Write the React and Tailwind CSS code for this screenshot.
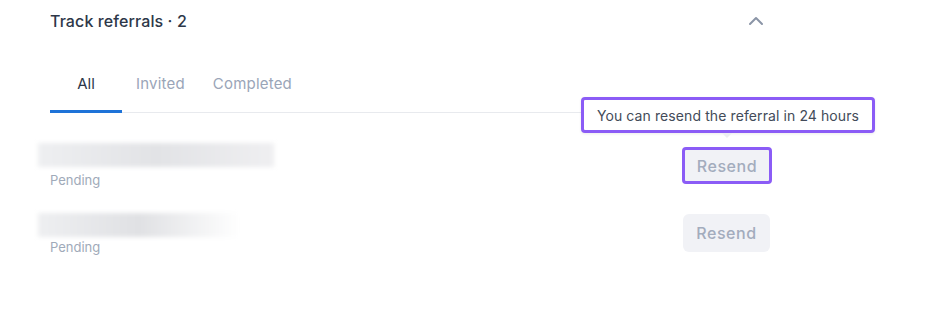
import React from "react";

export default function App() {
  return (
    <div className="relative w-[942px] h-[310px] bg-white overflow-hidden">
      <div className="font-['Inter',sans-serif]">
        {/* header */}
        <div className="flex items-center h-[42px] pl-[50px] pr-[178px] justify-between">
          <div className="text-[16px] font-medium text-[#2d3748] tracking-[0.1px]">Track referrals · 2</div>
          <svg width="16" height="10" viewBox="0 0 16 10">
            <path d="M2 8 L8 2 L14 8" fill="none" stroke="#8b95a7" strokeWidth="2" strokeLinecap="round" strokeLinejoin="round" />
          </svg>
        </div>
        {/* tabs */}
        <div className="mt-[24px] ml-[50px] w-[535px] flex border-b border-[#e8eaee] h-[47px]">
          <div className="w-[72px] flex justify-center pt-[7px] text-[15px] text-[#2d3748] border-b-[3px] border-[#1e73d8] -mb-[1px]">All</div>
          <div className="ml-[14px] pt-[7px] text-[15px] text-[#9aa5b8] tracking-[0.2px]">Invited</div>
          <div className="ml-[28px] pt-[7px] text-[15px] text-[#9aa5b8] tracking-[0.2px]">Completed</div>
        </div>
        {/* rows */}
        <div className="mt-[30px] pl-[38px] flex flex-col">
          <div className="flex">
            <div className="w-[236px] h-[24px] bg-gradient-to-r from-[#eeeff1] via-[#e2e3e6] to-[#efeff1] blur-[2px]"></div>
          </div>
          <div className="pl-[12px] mt-[4px] text-[13px] text-[#a0aab9]">Pending</div>
          <div className="mt-[22px] flex">
            <div className="w-[202px] h-[24px] bg-gradient-to-r from-[#eeeff1] via-[#e0e1e4] to-[#ffffff] blur-[2px]"></div>
          </div>
          <div className="pl-[12px] mt-[1px] text-[13px] text-[#a0aab9]">Pending</div>
        </div>
      </div>
      {/* resend buttons */}
      <div className="absolute left-[682px] top-[147px] w-[90px] h-[37px] rounded-[4px] border-[3px] border-[#8b5cf6] bg-[#f1f2f6] flex items-center justify-center text-[16px] font-medium tracking-[0.6px] text-[#a3acbd] font-['Inter',sans-serif]">Resend</div>
      <div className="absolute left-[683px] top-[214px] w-[87px] h-[38px] rounded-[6px] bg-[#f1f2f6] flex items-center justify-center text-[16px] font-medium tracking-[0.6px] text-[#a3acbd] font-['Inter',sans-serif]">Resend</div>
      {/* tooltip */}
      <div className="absolute left-[581px] top-[97px] w-[294px] h-[36px] rounded-[4px] border-[3px] border-[#8b5cf6] bg-white flex items-center justify-center shadow-[0_1px_3px_rgba(0,0,0,0.08)]">
        <span className="text-[14px] text-[#434b59] tracking-[0.1px] font-['Inter',sans-serif]">You can resend the referral in 24 hours</span>
      </div>
      <div className="absolute left-[722px] top-[133px] w-0 h-0 border-l-[5px] border-r-[5px] border-t-[5px] border-l-transparent border-r-transparent border-t-[#eceef2]"></div>
    </div>
  );
}
